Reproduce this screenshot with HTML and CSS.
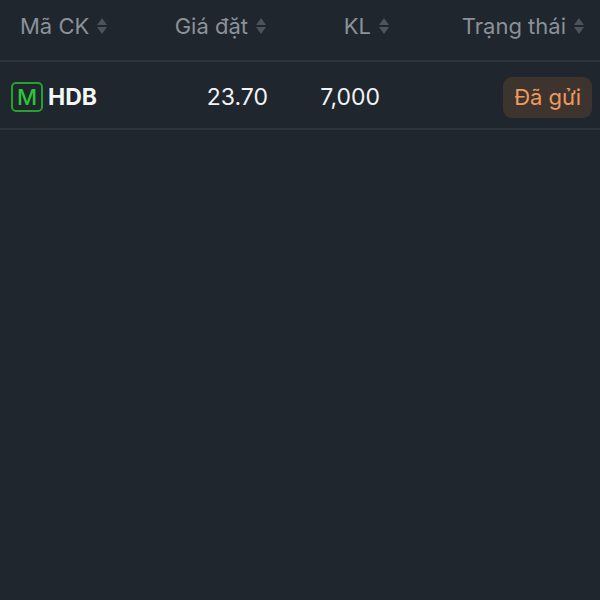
FILE: index.html
```html
<!DOCTYPE html>
<html lang="vi">
<head>
  <meta charset="UTF-8">
  <meta name="viewport" content="width=device-width, initial-scale=1.0">
  <title>Sổ lệnh</title>
  <link rel="stylesheet" href="styles.css">
</head>
<body>
  <div class="order-table">
    <div class="table-head">
      <div class="th th-left">Mã CK <svg class="sort" viewBox="0 0 10 16"><path d="M5 0 L10 7 L0 7 Z"/><path d="M0 9 L10 9 L5 16 Z"/></svg></div>
      <div class="th">Giá đặt <svg class="sort" viewBox="0 0 10 16"><path d="M5 0 L10 7 L0 7 Z"/><path d="M0 9 L10 9 L5 16 Z"/></svg></div>
      <div class="th">KL <svg class="sort" viewBox="0 0 10 16"><path d="M5 0 L10 7 L0 7 Z"/><path d="M0 9 L10 9 L5 16 Z"/></svg></div>
      <div class="th">Trạng thái <svg class="sort" viewBox="0 0 10 16"><path d="M5 0 L10 7 L0 7 Z"/><path d="M0 9 L10 9 L5 16 Z"/></svg></div>
    </div>
    <div class="table-row">
      <div class="td td-left">
        <span class="side-tag">M</span>
        <span class="symbol">HDB</span>
      </div>
      <div class="td">23.70</div>
      <div class="td">7,000</div>
      <div class="td"><span class="status status-sent">Đã gửi</span></div>
    </div>
  </div>
</body>
</html>
```

FILE: styles.css
```css
body {
  margin: 0;
  background-color: #1f262e;
  font-family: Inter, "Noto Sans", sans-serif;
  width: 600px;
  height: 600px;
}
.table-head {
  display: grid;
  grid-template-columns: 116px 130px 123px 1fr;
  align-items: center;
  height: 60px;
  padding: 0 16px 0 20px;
  border-bottom: 2px solid #2c343d;
}
.th {
  display: flex;
  align-items: center;
  justify-content: flex-end;
  gap: 8px;
  color: #8b9199;
  font-size: 22px;
  padding-bottom: 8px;
}
.th-left {
  justify-content: flex-start;
}
.sort {
  flex-shrink: 0;
  width: 10px;
  height: 16px;
  fill: #4b535d;
}
.table-row {
  display: grid;
  grid-template-columns: 125px 132px 112px 1fr;
  align-items: center;
  height: 66px;
  padding: 0 8px 0 11px;
  border-bottom: 2px solid #2c343d;
}
.td {
  text-align: right;
  color: #f2f3f5;
  font-size: 23px;
  padding-top: 4px;
}
.td-left {
  display: flex;
  align-items: center;
  gap: 5px;
  text-align: left;
}
.side-tag {
  display: inline-flex;
  align-items: center;
  justify-content: center;
  width: 28px;
  height: 26px;
  border: 2px solid #27a12e;
  border-radius: 5px;
  color: #2ec43a;
  font-size: 22px;
  font-weight: 500;
}
.symbol {
  font-weight: 700;
  font-size: 23px;
  color: #f5f6f7;
}
.status {
  display: inline-block;
  padding: 0 11px;
  line-height: 41px;
  border-radius: 9px;
  font-size: 22px;
}
.status-sent {
  background-color: #3d3430;
  color: #ef9a5c;
}
```
